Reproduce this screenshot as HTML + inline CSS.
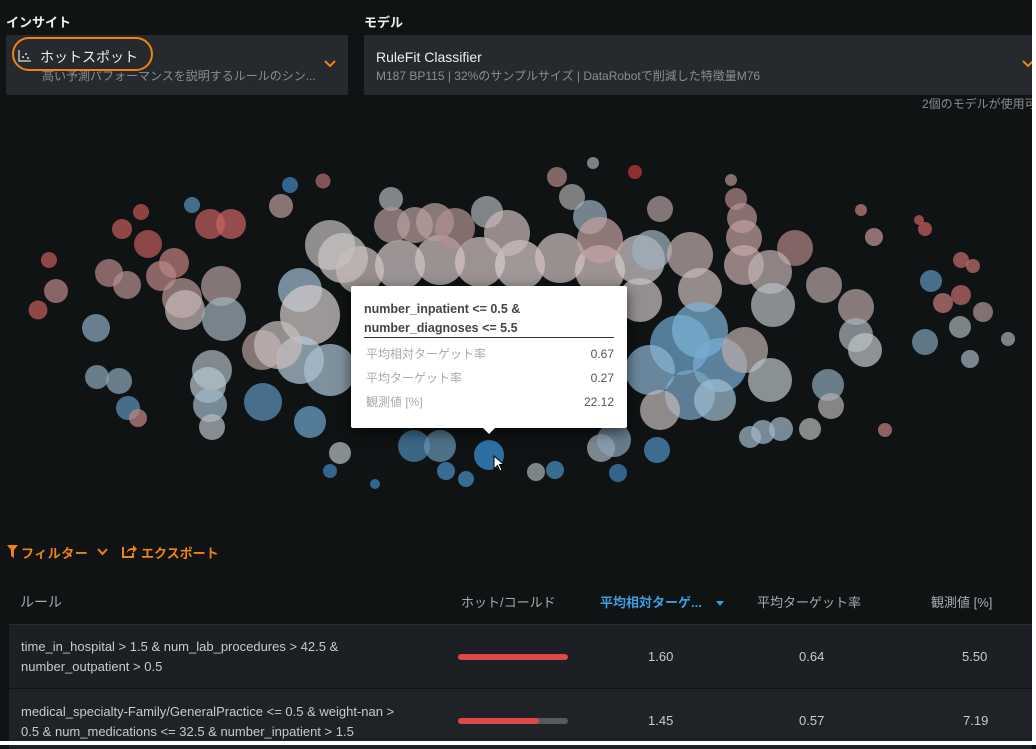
<!DOCTYPE html>
<html><head><meta charset="utf-8"><style>
*{margin:0;padding:0;box-sizing:border-box}
body{width:1036px;height:745px;background:#0f1314;position:relative;overflow:hidden;font-family:"Liberation Sans","Noto Sans CJK JP",sans-serif;color:#e8e8e8}
.a{position:absolute}
.lbl{font-size:13px;font-weight:bold;color:#f0f0f0}
.box{background:#262a2f;border-radius:2px}
.sub{font-size:12px;color:#8a8d90;white-space:nowrap}
.th{font-size:13px;color:#a8abad}
.td{font-size:13px;color:#c8cacc}
</style></head><body>
<div class="a lbl" style="left:6px;top:12px">インサイト</div>
<div class="a lbl" style="left:364px;top:12px">モデル</div>
<div class="a box" style="left:6px;top:35px;width:342px;height:60px"></div>
<div class="a box" style="left:364px;top:35px;width:670px;height:60px"></div>
<svg class="a" style="left:18px;top:50px" width="14" height="12" viewBox="0 0 14 12"><path d="M1 0V11H13" stroke="#ddd" fill="none" stroke-width="1.2"/><circle cx="5" cy="7" r="1" fill="#ddd"/><circle cx="8" cy="4" r="1" fill="#ddd"/><circle cx="10" cy="8" r="1" fill="#ddd"/></svg>
<div class="a" style="left:40px;top:47px;font-size:14px;color:#eee">ホットスポット</div>
<div class="a sub" style="left:42px;top:67px">高い予測パフォーマンスを説明するルールのシン...</div>
<div class="a" style="left:12px;top:37px;width:141px;height:34px;border:2.5px solid #f0820f;border-radius:17px"></div>
<svg class="a" style="left:324px;top:60px" width="12" height="8"><path d="M1 1L6 6L11 1" stroke="#f0820f" stroke-width="2" fill="none"/></svg>
<svg class="a" style="left:1022px;top:60px" width="12" height="8"><path d="M1 1L6 6L11 1" stroke="#f0820f" stroke-width="2" fill="none"/></svg>
<div class="a" style="left:376px;top:49px;font-size:14px;color:#eee">RuleFit Classifier</div>
<div class="a sub" style="left:376px;top:67px">M187 BP115 | 32%のサンプルサイズ | DataRobotで削減した特徴量M76</div>
<div class="a sub" style="left:922px;top:95px">2個のモデルが使用可</div>

<svg class="a" style="left:0;top:0" width="1036" height="520">
<g fill-opacity="0.72">
<circle cx="330" cy="245" r="25" fill="#c0bcbc"/><circle cx="343" cy="258" r="25" fill="#ccc6c6"/>
<circle cx="300" cy="290" r="22" fill="#9fbdd2"/><circle cx="310" cy="315" r="30" fill="#d2cccc"/>
<circle cx="300" cy="360" r="24" fill="#b2c8d6"/><circle cx="330" cy="370" r="26" fill="#aac2d2"/>
<circle cx="360" cy="270" r="24" fill="#cabcbc"/><circle cx="400" cy="265" r="25" fill="#d3c6c6"/><circle cx="440" cy="260" r="25" fill="#d0c2c2"/><circle cx="480" cy="262" r="25" fill="#d2c4c4"/><circle cx="520" cy="265" r="25" fill="#d8caca"/><circle cx="560" cy="258" r="25" fill="#d0bfbf"/><circle cx="600" cy="270" r="25" fill="#d3c4c4"/><circle cx="640" cy="260" r="25" fill="#d0c8ca"/>
<circle cx="391" cy="199" r="12" fill="#aab2b6"/><circle cx="392" cy="225" r="18" fill="#b09898"/><circle cx="415" cy="225" r="18" fill="#b89e9e"/><circle cx="435" cy="222" r="19" fill="#b8a0a0"/><circle cx="455" cy="228" r="20" fill="#b09090"/>
<circle cx="487" cy="212" r="16" fill="#aab2b6"/><circle cx="507" cy="233" r="23" fill="#cbb8b8"/>
<circle cx="290" cy="185" r="8" fill="#3f88bf"/><circle cx="323" cy="181" r="7.5" fill="#b06e6e"/><circle cx="281" cy="206" r="12" fill="#b89898"/>
<circle cx="192" cy="205" r="8" fill="#5a8fb5"/><circle cx="141" cy="212" r="8" fill="#c05555"/><circle cx="122" cy="229" r="10" fill="#c05c5c"/><circle cx="148" cy="244" r="14" fill="#c05a5a"/>
<circle cx="210" cy="224" r="15" fill="#c25d5d"/><circle cx="231" cy="224" r="15" fill="#c96262"/>
<circle cx="174" cy="263" r="15" fill="#c07e7e"/><circle cx="161" cy="276" r="15" fill="#bc8585"/>
<circle cx="49" cy="260" r="8" fill="#c05a5a"/><circle cx="56" cy="291" r="12" fill="#b98686"/><circle cx="38" cy="310" r="9.5" fill="#c05c5c"/>
<circle cx="109" cy="273" r="14" fill="#b48888"/><circle cx="127" cy="285" r="14" fill="#b49090"/>
<circle cx="96" cy="328" r="14" fill="#8aa9bf"/>
<circle cx="182" cy="298" r="20" fill="#b49494"/><circle cx="185" cy="310" r="20" fill="#c8b8b8"/>
<circle cx="221" cy="286" r="20" fill="#b29c9c"/><circle cx="224" cy="319" r="22" fill="#9fb0bb"/>
<circle cx="97" cy="377" r="12" fill="#8aa5b8"/><circle cx="119" cy="381" r="13" fill="#8aa5b8"/>
<circle cx="128" cy="408" r="12" fill="#5b91b8"/><circle cx="138" cy="418" r="9" fill="#c08585"/>
<circle cx="212" cy="370" r="20" fill="#aab7be"/><circle cx="208" cy="385" r="18" fill="#b5c5cf"/><circle cx="210" cy="405" r="17" fill="#9fb7c7"/><circle cx="212" cy="427" r="13" fill="#b4bbbf"/>
<circle cx="262" cy="350" r="20" fill="#b19a9a"/><circle cx="278" cy="345" r="24" fill="#c8bcbc"/>
<circle cx="263" cy="402" r="19" fill="#5d93bb"/><circle cx="310" cy="422" r="16" fill="#6ca4cc"/>
<circle cx="410" cy="350" r="30" fill="#a6b8c5"/><circle cx="380" cy="330" r="25" fill="#c9c0c0"/>
<circle cx="414" cy="446" r="16" fill="#4d87b3"/><circle cx="440" cy="446" r="16" fill="#6895b5"/><circle cx="489" cy="455" r="15" fill="#2e6fa3" fill-opacity="1"/>
<circle cx="340" cy="453" r="11" fill="#b4bec4"/><circle cx="330" cy="471" r="7" fill="#3e85be"/><circle cx="375" cy="484" r="5" fill="#3e85be"/><circle cx="446" cy="471" r="9" fill="#4a8fc2"/><circle cx="466" cy="479" r="8" fill="#4a8fc2"/>
<circle cx="557" cy="177" r="10" fill="#b08888"/><circle cx="593" cy="163" r="6" fill="#a8acae"/><circle cx="635" cy="172" r="7" fill="#c03a3a"/>
<circle cx="572" cy="197" r="13" fill="#aaa8a8"/><circle cx="590" cy="217" r="17" fill="#9aafbd"/><circle cx="600" cy="240" r="23" fill="#c0a0a0"/>
<circle cx="660" cy="209" r="13" fill="#b19c9c"/>
<circle cx="731" cy="180" r="6" fill="#b09090"/><circle cx="736" cy="199" r="11" fill="#b08888"/><circle cx="742" cy="218" r="15" fill="#b49494"/><circle cx="744" cy="238" r="18" fill="#c0a0a0"/><circle cx="744" cy="265" r="20" fill="#c8aaaa"/>
<circle cx="795" cy="248" r="18" fill="#b08585"/>
<circle cx="770" cy="272" r="22" fill="#c0b0b0"/>
<circle cx="652" cy="250" r="20" fill="#9fb2bf"/><circle cx="690" cy="255" r="23" fill="#c0abab"/><circle cx="700" cy="290" r="22" fill="#c9baba"/>
<circle cx="773" cy="305" r="22" fill="#b6bcc0"/><circle cx="824" cy="285" r="18" fill="#b4a2a2"/>
<circle cx="856" cy="307" r="18" fill="#b8a4a4"/><circle cx="856" cy="335" r="17" fill="#a8b3ba"/><circle cx="865" cy="350" r="17" fill="#bfc3c6"/>
<circle cx="828" cy="385" r="16" fill="#8aa5b8"/><circle cx="831" cy="406" r="13" fill="#b4b0b0"/>
<circle cx="861" cy="210" r="6" fill="#c08080"/><circle cx="874" cy="237" r="9" fill="#c09595"/><circle cx="919" cy="220" r="5" fill="#c06060"/><circle cx="925" cy="229" r="7" fill="#c86060"/>
<circle cx="961" cy="260" r="8" fill="#c06a6a"/><circle cx="973" cy="266" r="7" fill="#c07070"/>
<circle cx="931" cy="281" r="11" fill="#5d93bb"/><circle cx="943" cy="303" r="10" fill="#c07a7a"/><circle cx="961" cy="295" r="10" fill="#c06a6a"/><circle cx="983" cy="312" r="10" fill="#b09595"/>
<circle cx="960" cy="327" r="11" fill="#a8b0b4"/><circle cx="925" cy="342" r="13" fill="#7d9fb6"/><circle cx="970" cy="359" r="9" fill="#9fb3bf"/><circle cx="1008" cy="339" r="7" fill="#a8acae"/>
<circle cx="885" cy="430" r="7" fill="#c08080"/>
<circle cx="750" cy="437" r="11" fill="#9fb7c7"/><circle cx="763" cy="432" r="12" fill="#9fb7c7"/><circle cx="781" cy="429" r="12" fill="#9fb7c7"/><circle cx="810" cy="429" r="11" fill="#b4b8ba"/>
<circle cx="536" cy="472" r="9" fill="#a8b0b4"/><circle cx="555" cy="470" r="9" fill="#4a8fc2"/><circle cx="601" cy="448" r="14" fill="#a4b4be"/><circle cx="614" cy="440" r="17" fill="#8aa5b8"/><circle cx="618" cy="473" r="9" fill="#3e85be"/><circle cx="657" cy="450" r="13" fill="#4f8fc0"/>
<circle cx="680" cy="345" r="30" fill="#6ea6cf"/><circle cx="700" cy="330" r="28" fill="#7db1d6"/><circle cx="720" cy="365" r="27" fill="#78acd2"/><circle cx="690" cy="395" r="25" fill="#7aa6c5"/><circle cx="650" cy="370" r="25" fill="#8ab4d2"/><circle cx="745" cy="350" r="23" fill="#b8aaaa"/><circle cx="770" cy="380" r="22" fill="#b9c2c8"/><circle cx="715" cy="400" r="21" fill="#9fbccf"/><circle cx="660" cy="410" r="20" fill="#c0b8b8"/><circle cx="640" cy="300" r="22" fill="#c9c0c0"/>
</g>
</svg>

<div class="a" style="left:351px;top:286px;width:276px;height:142px;background:#fff;border-radius:2px;box-shadow:0 4px 14px rgba(0,0,0,.6)"></div>
<div class="a" style="left:482px;top:427px;width:0;height:0;border-left:7px solid transparent;border-right:7px solid transparent;border-top:7px solid #fff"></div>
<div class="a" style="left:364px;top:300px;font-size:12.5px;font-weight:bold;color:#444;line-height:19px">number_inpatient &lt;= 0.5 &amp;<br>number_diagnoses &lt;= 5.5</div>
<div class="a" style="left:364px;top:337px;width:250px;height:1px;background:#333"></div>
<div class="a" style="left:366px;top:342px;font-size:12px;color:#aaa;line-height:24px">平均相対ターゲット率<br>平均ターゲット率<br>観測値 [%]</div>
<div class="a" style="left:540px;top:342px;width:74px;text-align:right;font-size:12px;color:#555;line-height:24px">0.67<br>0.27<br>22.12</div>
<svg class="a" style="left:493px;top:455px" width="12" height="18"><path d="M1 1V14L4.5 10.5L7 16L9 15L6.5 9.5H11Z" fill="#fff" stroke="#000" stroke-width="1"/></svg>

<svg class="a" style="left:7px;top:545px" width="11" height="13"><path d="M0 0H11L7 5V13L4 11V5Z" fill="#f0820f"/></svg>
<div class="a" style="left:21px;top:543px;font-size:13px;font-weight:bold;color:#f0820f;letter-spacing:0.5px">フィルター</div>
<svg class="a" style="left:97px;top:548px" width="11" height="8"><path d="M1 1L5.5 6L10 1" stroke="#f0820f" stroke-width="2" fill="none"/></svg>
<svg class="a" style="left:122px;top:544px" width="15" height="14"><path d="M1 3V13H11V9" stroke="#f0820f" stroke-width="2" fill="none"/><path d="M5 9C5 5 8 4 11 4V1L15 5L11 9V6C8 6 6 7 5 9Z" fill="#f0820f"/></svg>
<div class="a" style="left:141px;top:543px;font-size:13px;font-weight:bold;color:#f0820f">エクスポート</div>

<div class="a th" style="left:20px;top:592px;font-size:14px">ルール</div>
<div class="a th" style="left:461px;top:592px">ホット/コールド</div>
<div class="a th" style="left:600px;top:592px;color:#3d9ee0;font-weight:bold">平均相対ターゲ...</div>
<div class="a" style="left:716px;top:601px;width:0;height:0;border-left:4px solid transparent;border-right:4px solid transparent;border-top:5px solid #3d9ee0"></div>
<div class="a th" style="left:757px;top:592px">平均ターゲット率</div>
<div class="a th" style="left:931px;top:592px">観測値 [%]</div>

<div class="a" style="left:9px;top:624px;width:1023px;height:1px;background:#2a2e33"></div>
<div class="a" style="left:9px;top:625px;width:1023px;height:63px;background:#1c2024"></div>
<div class="a" style="left:9px;top:689px;width:1023px;height:60px;background:#1f2327"></div>
<div class="a td" style="left:21px;top:637px;line-height:20px">time_in_hospital &gt; 1.5 &amp; num_lab_procedures &gt; 42.5 &amp;<br>number_outpatient &gt; 0.5</div>
<div class="a" style="left:458px;top:654px;width:110px;height:6px;border-radius:3px;background:#e04848"></div>
<div class="a td" style="left:648px;top:649px">1.60</div>
<div class="a td" style="left:799px;top:649px">0.64</div>
<div class="a td" style="left:962px;top:649px">5.50</div>
<div class="a td" style="left:21px;top:702px;line-height:20px">medical_specialty-Family/GeneralPractice &lt;= 0.5 &amp; weight-nan &gt;<br>0.5 &amp; num_medications &lt;= 32.5 &amp; number_inpatient &gt; 1.5</div>
<div class="a" style="left:458px;top:718px;width:110px;height:6px;border-radius:3px;background:#555a5e"></div>
<div class="a" style="left:458px;top:718px;width:81px;height:6px;border-radius:3px;background:#e04848"></div>
<div class="a td" style="left:648px;top:713px">1.45</div>
<div class="a td" style="left:799px;top:713px">0.57</div>
<div class="a td" style="left:963px;top:713px">7.19</div>

<div class="a" style="left:1032px;top:0;width:4px;height:745px;background:#fff"></div>
<div class="a" style="left:0;top:741px;width:1036px;height:4px;background:#fff"></div>
</body></html>
